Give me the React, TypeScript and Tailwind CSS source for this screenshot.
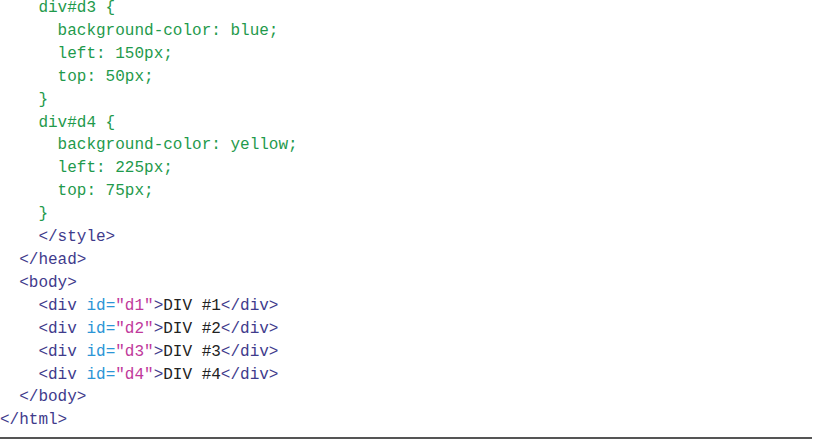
import React from "react";

const G = "text-[#1f9a4c]";
const T = "text-[#3f3b8c]";
const A = "text-[#2b95d6]";
const S = "text-[#c0399b]";
const K = "text-[#222222]";

type Seg = [string, string];
const lines: Seg[][] = [
  [[G, "    div#d3 {"]],
  [[G, "      background-color: blue;"]],
  [[G, "      left: 150px;"]],
  [[G, "      top: 50px;"]],
  [[G, "    }"]],
  [[G, "    div#d4 {"]],
  [[G, "      background-color: yellow;"]],
  [[G, "      left: 225px;"]],
  [[G, "      top: 75px;"]],
  [[G, "    }"]],
  [[T, "    </style>"]],
  [[T, "  </head>"]],
  [[T, "  <body>"]],
  ...[1, 2, 3, 4].map((n) => [
    [T, "    <div "],
    [A, "id="],
    [S, `"d${n}"`],
    [T, ">"],
    [K, `DIV #${n}`],
    [T, "</div>"],
  ] as Seg[]),
  [[T, "  </body>"]],
  [[T, "</html>"]],
];

export default function App() {
  return (
    <div className="w-[813px] h-[439px] bg-white overflow-hidden flex flex-col">
      <pre
        className="-mt-[3px] text-[16px] leading-[22.9px] m-0 h-[440px] shrink-0 overflow-hidden"
        style={{ fontFamily: '"Liberation Mono", "DejaVu Sans Mono", monospace' }}
      >
        {lines.map((segs, i) => (
          <div key={i} className="whitespace-pre">
            {segs.map(([c, t], j) => (
              <span key={j} className={c}>
                {t}
              </span>
            ))}
          </div>
        ))}
      </pre>
      <div className="h-[2px] w-[812px] shrink-0 bg-[#555555]" />
    </div>
  );
}
